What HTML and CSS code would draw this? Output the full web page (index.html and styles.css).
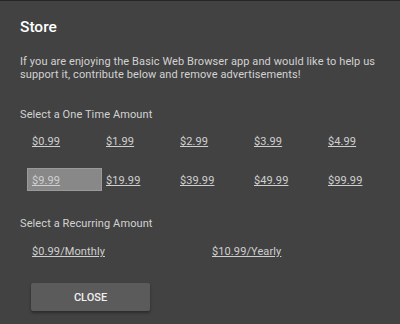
FILE: index.html
```html
<!DOCTYPE html>
<html lang="en">
<head>
    <meta charset="UTF-8">
    <meta name="viewport" content="width=device-width, initial-scale=1.0">
    <title>Store</title>
    <link rel="stylesheet" href="styles.css">
</head>
<body>
    <div class="screen">
        <div class="dialog">
            <h1>Store</h1>
            <p class="intro">If you are enjoying the Basic Web Browser app and would like to help us support it, contribute below and remove advertisements!</p>

            <div class="label">Select a One Time Amount</div>
            <div class="amounts">
                <a class="amount" href="#">$0.99</a>
                <a class="amount" href="#">$1.99</a>
                <a class="amount" href="#">$2.99</a>
                <a class="amount" href="#">$3.99</a>
                <a class="amount" href="#">$4.99</a>
                <a class="amount selected" href="#">$9.99</a>
                <a class="amount" href="#">$19.99</a>
                <a class="amount" href="#">$39.99</a>
                <a class="amount" href="#">$49.99</a>
                <a class="amount" href="#">$99.99</a>
            </div>

            <div class="label second">Select a Recurring Amount</div>
            <div class="recurring">
                <a class="amount" href="#">$0.99/Monthly</a>
                <a class="amount" href="#">$10.99/Yearly</a>
            </div>

            <button class="close">CLOSE</button>
        </div>
        <div class="edge">
            <div class="thumb"></div>
        </div>
    </div>
</body>
</html>
```

FILE: styles.css
```css
body {
    margin: 0;
    background-color: #424242;
    font-family: Roboto, "Liberation Sans", sans-serif;
}

.screen {
    display: flex;
    height: 323px;
    border-top: 1px solid #262626;
}

.dialog {
    flex: 1;
    padding: 0 20px;
}

.edge {
    width: 3px;
    background: #141414;
}

.edge .thumb {
    margin-top: 107px;
    height: 18px;
    background: #5c5c5c;
}

h1 {
    margin: 0;
    padding-top: 16px;
    font-size: 15.5px;
    line-height: 20px;
    font-weight: 500;
    color: #ffffff;
}

.intro {
    margin: 18px 0 0;
    font-size: 11px;
    line-height: 13px;
    letter-spacing: 0.1px;
    color: #d2d2d2;
}

.label {
    margin-top: 27px;
    font-size: 11px;
    line-height: 13px;
    letter-spacing: 0.1px;
    color: #d2d2d2;
}

.label.second {
    margin-top: 26px;
}

.amounts {
    display: grid;
    grid-template-columns: repeat(5, 74px);
    row-gap: 16px;
    margin: 8px 0 0 7px;
}

.recurring {
    display: grid;
    grid-template-columns: repeat(2, 180px);
    margin: 9px 0 0 7px;
}

.amount {
    box-sizing: border-box;
    height: 23px;
    padding: 5px 0 0 4px;
    border: 1px solid transparent;
    font-size: 11px;
    line-height: 13px;
    letter-spacing: 0.1px;
    color: #cfcfcf;
    text-decoration: underline;
}

.amount.selected {
    background: #888888;
    border-color: #9a9a9a;
    width: 75px;
}

.close {
    display: block;
    margin: 21px 0 0 11px;
    width: 119px;
    height: 28px;
    padding: 2px 0 0;
    border: none;
    border-radius: 2px;
    background: #5b5b5b;
    box-shadow: 0 2px 3px rgba(0, 0, 0, 0.35);
    font-family: Roboto, "Liberation Sans", sans-serif;
    font-size: 11px;
    line-height: 26px;
    font-weight: 500;
    color: #f0f0f0;
    cursor: pointer;
}
```
